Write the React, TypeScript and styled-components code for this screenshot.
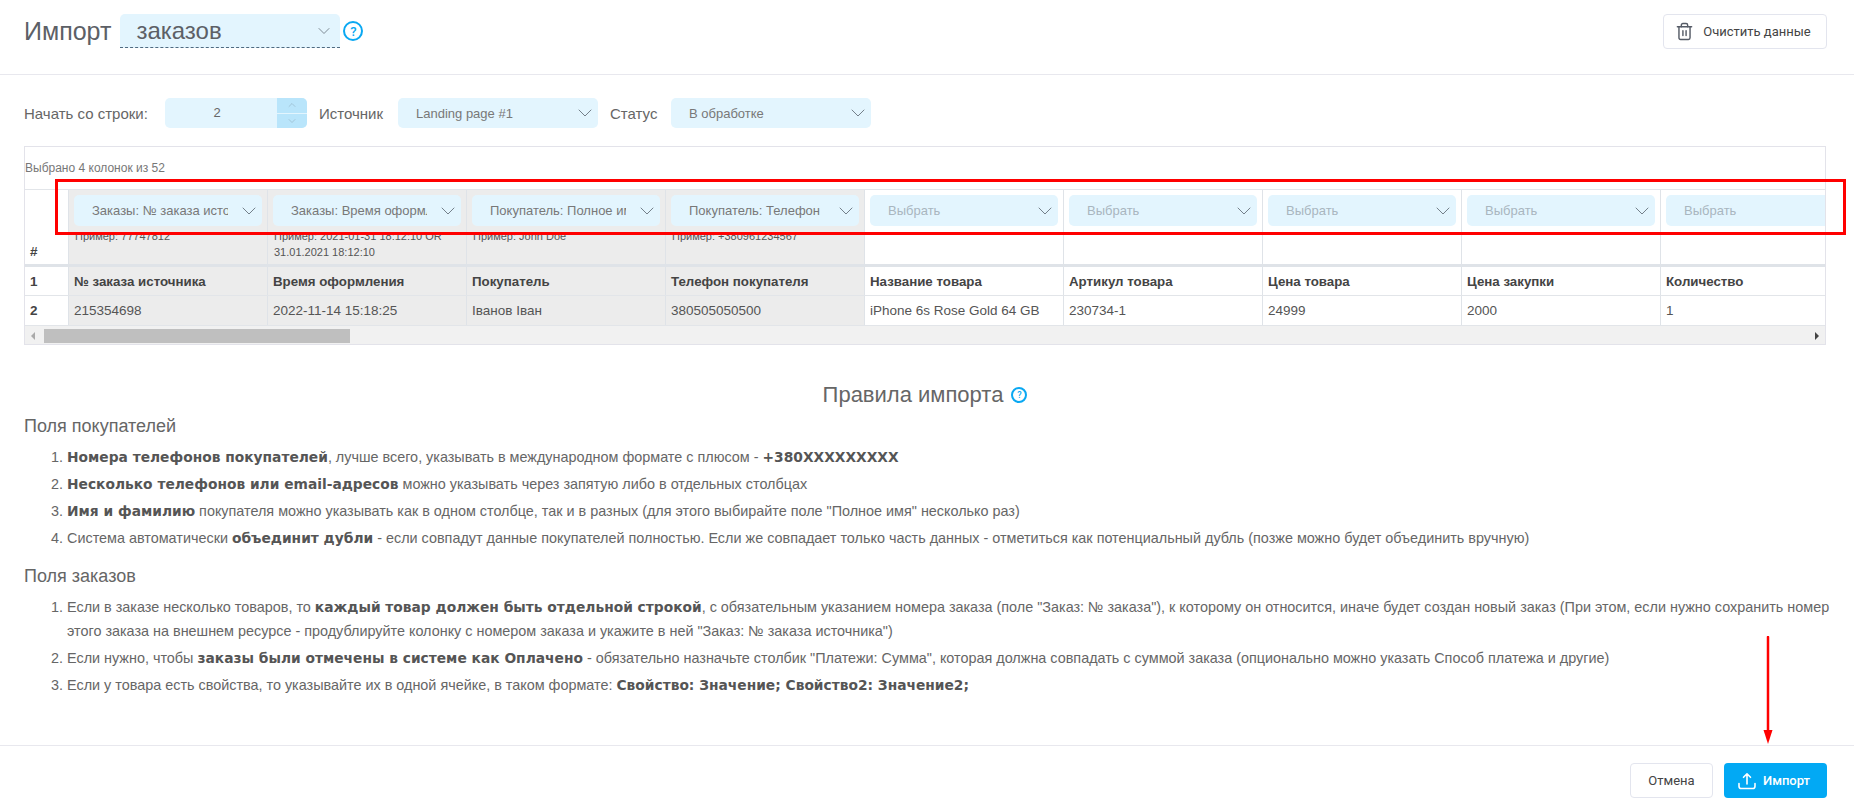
import React from "react";
import styled, { createGlobalStyle } from "styled-components";
import { ChevronDown, ChevronUp, Trash2 } from "lucide-react";

const GlobalStyle = createGlobalStyle`
  html, body {
    margin: 0;
    padding: 0;
    background: #fff;
    overflow: hidden;
  }
  * {
    box-sizing: border-box;
  }
`;

const Page = styled.div`
  position: relative;
  display: flex;
  flex-direction: column;
  width: 1854px;
  height: 807px;
  overflow: hidden;
  font-family: "Liberation Sans", Arial, sans-serif;
  color: #666;
`;

const Header = styled.header`
  display: flex;
  align-items: flex-start;
  justify-content: space-between;
  height: 75px;
  padding: 14px 27px 0 24px;
  border-bottom: 1px solid #e8e8ee;
`;

const TitleGroup = styled.div`
  display: flex;
  align-items: center;
`;

const Title = styled.h1`
  margin: 0 9px 0 0;
  font-size: 25px;
  font-weight: 400;
  color: #5c6066;
`;

const TitleSelect = styled.div`
  display: flex;
  align-items: center;
  justify-content: space-between;
  width: 220px;
  height: 34px;
  padding: 0 6px 0 16px;
  background: #e3f5fe;
  border-radius: 5px 5px 0 0;
  border-bottom: 1px dashed #4f6a80;
  font-size: 24px;
  color: #5c6066;
`;

const HelpMark = styled.span<{ $size: number }>`
  display: inline-flex;
  align-items: center;
  justify-content: center;
  width: ${(p) => p.$size}px;
  height: ${(p) => p.$size}px;
  margin-left: 3px;
  border: 2px solid #0aa8f2;
  border-radius: 50%;
  font-family: Roboto, sans-serif;
  font-size: ${(p) => p.$size - 7}px;
  font-weight: 500;
  color: #0aa8f2;
`;

const OutlineButton = styled.button<{ $width: number }>`
  display: flex;
  align-items: center;
  justify-content: center;
  gap: 9px;
  width: ${(p) => p.$width}px;
  height: 35px;
  padding: 0;
  background: #fff;
  border: 1px solid #e3e5ee;
  border-radius: 4px;
  font-family: Roboto, sans-serif;
  font-size: 13px;
  color: #444;
`;

const ClearButton = styled(OutlineButton)`
  padding-right: 4px;
`;

const Main = styled.main`
  flex: 1;
  padding: 23px 28px 0 24px;
  min-height: 0;
`;

const Controls = styled.div`
  display: flex;
  align-items: center;
  height: 30px;
  font-size: 15px;
  color: #666;
`;

const ControlLabel = styled.span<{ $width: number }>`
  width: ${(p) => p.$width}px;
  flex-shrink: 0;
  white-space: nowrap;
`;

const LabelAfterField = styled(ControlLabel)`
  padding-left: 12px;
`;

const NumberField = styled.div`
  display: flex;
  width: 142px;
  height: 30px;
  flex-shrink: 0;
  background: #e3f5fe;
  border-radius: 5px;
  overflow: hidden;
`;

const NumberValue = styled.span`
  flex: 1;
  padding-right: 8px;
  line-height: 30px;
  text-align: center;
  font-size: 13px;
`;

const Spinner = styled.div`
  display: flex;
  flex-direction: column;
  gap: 1px;
  width: 30px;
`;

const SpinnerStep = styled.span`
  display: flex;
  align-items: center;
  justify-content: center;
  flex: 1;
  background: #b9e5fb;
  color: #8aa5b5;
`;

const Select = styled.div<{ $width: string; $height: number; $placeholder?: boolean }>`
  display: flex;
  align-items: center;
  width: ${(p) => p.$width};
  height: ${(p) => p.$height}px;
  flex-shrink: 0;
  padding-left: 18px;
  background: #e3f5fe;
  border-radius: 5px;
  font-size: 13px;
  color: ${(p) => (p.$placeholder ? "#a9b6bf" : "#787878")};
`;

const SelectText = styled.span`
  flex: 1;
  min-width: 0;
  margin-right: 9px;
  white-space: nowrap;
  overflow: hidden;
`;

const Chevron = styled(ChevronDown)`
  flex-shrink: 0;
  width: 24px;
  height: 24px;
  margin-right: 1px;
  color: #74808a;
`;

const TitleChevron = styled(ChevronDown)`
  flex-shrink: 0;
  width: 20px;
  height: 20px;
  color: #74808a;
`;

const TableBox = styled.section`
  margin-top: 18px;
  height: 199px;
  border: 1px solid #e3e3ea;
  overflow: hidden;
`;

const SelectedInfo = styled.div`
  height: 42px;
  padding-top: 13px;
  font-size: 12px;
  line-height: 16px;
  color: #777;
`;

const Row = styled.div<{ $height: number; $thick?: boolean; $first?: boolean }>`
  display: grid;
  grid-template-columns: 44px repeat(9, 199px);
  height: ${(p) => p.$height}px;
  border-top: ${(p) => (p.$first ? "1px solid #e2e5e9" : "0")};
  border-bottom: ${(p) => (p.$thick ? "3px solid #dfe3e8" : "1px solid #e2e5e9")};
`;

const Cell = styled.div<{ $marked?: boolean; $strong?: boolean }>`
  padding: 0 5px;
  display: flex;
  align-items: center;
  white-space: nowrap;
  overflow: hidden;
  border-right: 1px solid #dfe3e8;
  background: ${(p) => (p.$marked ? "#ececec" : "#fff")};
  font-size: ${(p) => (p.$strong ? 13.3 : 13.5)}px;
  font-weight: ${(p) => (p.$strong ? 700 : 400)};
  color: ${(p) => (p.$strong ? "#444" : "#555")};
`;

const RowHead = styled(Cell)`
  font-weight: 700;
  color: #444;
`;

const HeadRowHead = styled(RowHead)`
  align-items: flex-end;
  padding-bottom: 5px;
`;

const HeadCell = styled.div<{ $marked?: boolean }>`
  padding: 5px 5px 0;
  overflow: hidden;
  border-right: 1px solid #dfe3e8;
  background: ${(p) => (p.$marked ? "#ececec" : "#fff")};
`;

const ExampleBlock = styled.div`
  margin: 2px 0 0 1px;
  font-size: 11px;
  line-height: 16px;
  color: #555;
`;

const ScrollBar = styled.div`
  display: flex;
  align-items: center;
  justify-content: space-between;
  height: 19px;
  padding: 0 6px;
  background: #f1f1f1;
`;

const ScrollArrow = styled.span<{ $right?: boolean }>`
  width: 0;
  height: 0;
  border-top: 4px solid transparent;
  border-bottom: 4px solid transparent;
  ${(p) => (p.$right ? "border-left: 4px solid #444;" : "border-right: 4px solid #aaa;")}
`;

const ScrollThumb = styled.span`
  width: 306px;
  height: 14px;
  margin-left: 9px;
  margin-right: auto;
  background: #bfbfbf;
`;

const RulesHeading = styled.h2`
  display: flex;
  align-items: center;
  justify-content: center;
  margin: 36px 0 0;
  height: 28px;
  font-size: 22px;
  font-weight: 400;
  color: #666;
`;

const RulesHelp = styled(HelpMark)`
  margin-left: 8px;
`;

const Subheading = styled.h3<{ $top: number }>`
  margin: ${(p) => p.$top}px 0 0;
  height: 24px;
  font-size: 18px;
  line-height: 24px;
  font-weight: 400;
  color: #666;
`;

const RuleList = styled.ol`
  margin: 7px -5px 0 0;
  padding: 0 0 0 43px;
  font-size: 14.4px;
  line-height: 24px;
  color: #666;
`;

const RuleItem = styled.li`
  margin-bottom: 3px;
`;

const Strong = styled.b`
  font-family: "DejaVu Sans", Verdana, sans-serif;
  font-size: 13.8px;
  font-weight: 700;
  color: #555;
`;

const Footer = styled.footer`
  display: flex;
  justify-content: flex-end;
  gap: 11px;
  height: 62px;
  padding: 17px 27px 0 0;
  border-top: 1px solid #e8e8ee;
`;

const PrimaryButton = styled.button`
  display: flex;
  align-items: center;
  justify-content: center;
  gap: 7px;
  width: 103px;
  height: 35px;
  padding: 0 3px 0 0;
  background: #02a9f4;
  border: 0;
  border-radius: 4px;
  font-family: Roboto, sans-serif;
  font-size: 13px;
  font-weight: 500;
  color: #fff;
`;

const RedFrame = styled.div`
  position: absolute;
  left: 55px;
  top: 179px;
  width: 1791px;
  height: 56px;
  border: 3.5px solid #f00;
  pointer-events: none;
`;

const RedArrow = styled.svg`
  position: absolute;
  left: 1761px;
  top: 636px;
`;

const columns = [
  { field: "Заказы: № заказа источника", example: ["Пример: 77747812"], title: "№ заказа источника", value: "215354698" },
  { field: "Заказы: Время оформления", example: ["Пример: 2021-01-31 18:12:10 OR", "31.01.2021 18:12:10"], title: "Время оформления", value: "2022-11-14 15:18:25" },
  { field: "Покупатель: Полное имя", example: ["Пример: John Doe"], title: "Покупатель", value: "Іванов Іван" },
  { field: "Покупатель: Телефон", example: ["Пример: +380961234567"], title: "Телефон покупателя", value: "380505050500" },
  { title: "Название товара", value: "iPhone 6s Rose Gold 64 GB" },
  { title: "Артикул товара", value: "230734-1" },
  { title: "Цена товара", value: "24999" },
  { title: "Цена закупки", value: "2000" },
  { title: "Количество", value: "1" },
];

const UploadIcon = () => (
  <svg width="18" height="18" viewBox="0 0 18 18" fill="none" stroke="#fff" strokeWidth="1.6" strokeLinecap="round" strokeLinejoin="round">
    <path d="M9 12V2M5.5 5.3 9 1.8l3.5 3.5" />
    <path d="M1 11.5v2.7A2.3 2.3 0 0 0 3.3 16.5h11.4a2.3 2.3 0 0 0 2.3-2.3v-2.7" />
  </svg>
);

export default function App() {
  return (
    <Page>
      <GlobalStyle />
      <Header>
        <TitleGroup>
          <Title>Импорт</Title>
          <TitleSelect>
            заказов
            <TitleChevron strokeWidth={1.1} />
          </TitleSelect>
          <HelpMark $size={20}>?</HelpMark>
        </TitleGroup>
        <ClearButton $width={164}>
          <Trash2 size={19} strokeWidth={1.8} color="#555b66" />
          Очистить данные
        </ClearButton>
      </Header>

      <Main>
        <Controls>
          <ControlLabel $width={141}>Начать со строки:</ControlLabel>
          <NumberField>
            <NumberValue>2</NumberValue>
            <Spinner>
              <SpinnerStep><ChevronUp size={12} strokeWidth={1} /></SpinnerStep>
              <SpinnerStep><ChevronDown size={12} strokeWidth={1} /></SpinnerStep>
            </Spinner>
          </NumberField>
          <LabelAfterField $width={91}>Источник</LabelAfterField>
          <Select $width="200px" $height={30}>
            <SelectText>Landing page #1</SelectText>
            <Chevron strokeWidth={1} />
          </Select>
          <LabelAfterField $width={73}>Статус</LabelAfterField>
          <Select $width="200px" $height={30}>
            <SelectText>В обработке</SelectText>
            <Chevron strokeWidth={1} />
          </Select>
        </Controls>

        <TableBox>
          <SelectedInfo>Выбрано 4 колонок из 52</SelectedInfo>
          <Row $height={78} $thick $first>
            <HeadRowHead>#</HeadRowHead>
            {columns.map((col, i) => (
              <HeadCell key={i} $marked={!!col.field}>
                <Select $width="100%" $height={31} $placeholder={!col.field}>
                  <SelectText>{col.field ?? "Выбрать"}</SelectText>
                  <Chevron strokeWidth={1} />
                </Select>
                {col.example && (
                  <ExampleBlock>
                    {col.example.map((line) => <div key={line}>{line}</div>)}
                  </ExampleBlock>
                )}
              </HeadCell>
            ))}
          </Row>
          <Row $height={29}>
            <RowHead>1</RowHead>
            {columns.map((col, i) => (
              <Cell key={i} $marked={!!col.field} $strong>{col.title}</Cell>
            ))}
          </Row>
          <Row $height={30}>
            <RowHead>2</RowHead>
            {columns.map((col, i) => (
              <Cell key={i} $marked={!!col.field}>{col.value}</Cell>
            ))}
          </Row>
          <ScrollBar>
            <ScrollArrow />
            <ScrollThumb />
            <ScrollArrow $right />
          </ScrollBar>
        </TableBox>

        <RulesHeading>
          Правила импорта
          <RulesHelp $size={16}>?</RulesHelp>
        </RulesHeading>

        <Subheading $top={5}>Поля покупателей</Subheading>
        <RuleList>
          <RuleItem><Strong>Номера телефонов покупателей</Strong>, лучше всего, указывать в международном формате с плюсом - <Strong>+380XXXXXXXXX</Strong></RuleItem>
          <RuleItem><Strong>Несколько телефонов или email-адресов</Strong> можно указывать через запятую либо в отдельных столбцах</RuleItem>
          <RuleItem><Strong>Имя и фамилию</Strong> покупателя можно указывать как в одном столбце, так и в разных (для этого выбирайте поле "Полное имя" несколько раз)</RuleItem>
          <RuleItem>Система автоматически <Strong>объединит дубли</Strong> - если совпадут данные покупателей полностью. Если же совпадает только часть данных - отметиться как потенциальный дубль (позже можно будет объединить вручную)</RuleItem>
        </RuleList>

        <Subheading $top={14}>Поля заказов</Subheading>
        <RuleList>
          <RuleItem>Если в заказе несколько товаров, то <Strong>каждый товар должен быть отдельной строкой</Strong>, с обязательным указанием номера заказа (поле "Заказ: № заказа"), к которому он относится, иначе будет создан новый заказ (При этом, если нужно сохранить номер этого заказа на внешнем ресурсе - продублируйте колонку с номером заказа и укажите в ней "Заказ: № заказа источника")</RuleItem>
          <RuleItem>Если нужно, чтобы <Strong>заказы были отмечены в системе как Оплачено</Strong> - обязательно назначьте столбик "Платежи: Сумма", которая должна совпадать с суммой заказа (опционально можно указать Способ платежа и другие)</RuleItem>
          <RuleItem>Если у товара есть свойства, то указывайте их в одной ячейке, в таком формате: <Strong>Свойство: Значение; Свойство2: Значение2;</Strong></RuleItem>
        </RuleList>
      </Main>

      <Footer>
        <OutlineButton $width={83}>Отмена</OutlineButton>
        <PrimaryButton>
          <UploadIcon />
          Импорт
        </PrimaryButton>
      </Footer>

      <RedFrame />
      <RedArrow width="14" height="110" viewBox="0 0 14 110">
        <path d="M7 1v96" stroke="#f00" strokeWidth="2.5" strokeLinecap="round" />
        <path d="M2.5 94h9L7 108z" fill="#f00" />
      </RedArrow>
    </Page>
  );
}
